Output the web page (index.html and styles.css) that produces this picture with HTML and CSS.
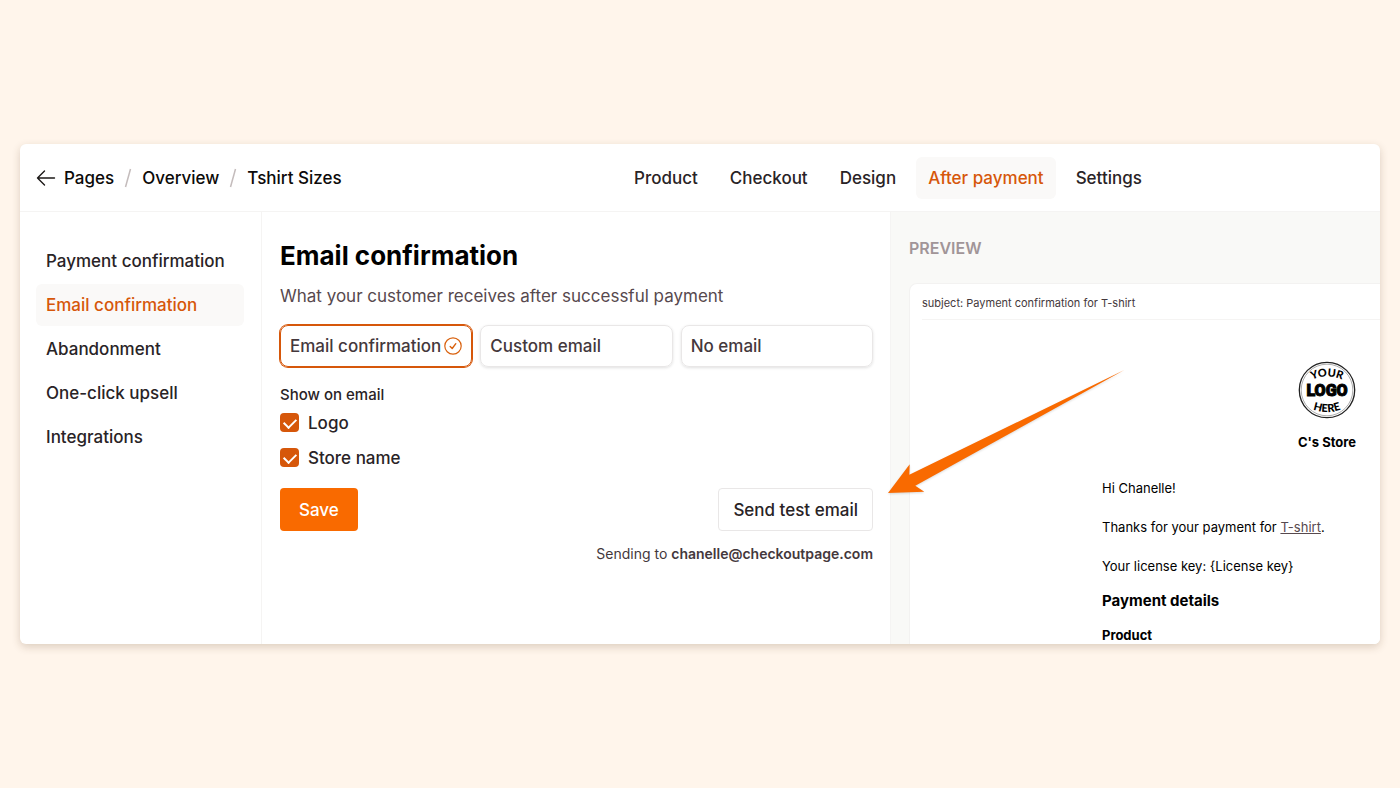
FILE: index.html
```html
<!DOCTYPE html>
<html lang="en">
<head>
    <meta charset="UTF-8">
    <meta name="viewport" content="width=device-width, initial-scale=1.0">
    <title>Email confirmation</title>
    <link rel="stylesheet" href="styles.css">
</head>
<body>
    <div class="window">
        <header class="header">
            <nav class="breadcrumb">
                <a href="#" class="back">
                    <svg width="20" height="18" viewBox="0 0 20 18" fill="none" stroke="#1c1917" stroke-width="1.4" stroke-linecap="round" stroke-linejoin="round"><path d="M18.500 9H1.500M8.500 2L1.500 9l7 7"/></svg>
                    Pages
                </a>
                <svg class="slash" width="8" height="20" viewBox="0 0 8 20" stroke="#c4bcbc" stroke-width="1.500"><path d="M6.500 1L1.500 19"/></svg>
                <a href="#">Overview</a>
                <svg class="slash" width="8" height="20" viewBox="0 0 8 20" stroke="#c4bcbc" stroke-width="1.500"><path d="M6.500 1L1.500 19"/></svg>
                <a href="#">Tshirt Sizes</a>
            </nav>
            <nav class="tabs">
                <a href="#">Product</a>
                <a href="#">Checkout</a>
                <a href="#">Design</a>
                <a href="#" class="active">After payment</a>
                <a href="#">Settings</a>
            </nav>
        </header>

        <div class="panes">
            <nav class="sidebar">
                <a href="#">Payment confirmation</a>
                <a href="#" class="active">Email confirmation</a>
                <a href="#">Abandonment</a>
                <a href="#">One-click upsell</a>
                <a href="#">Integrations</a>
            </nav>

            <main class="main">
                <h1>Email confirmation</h1>
                <p class="subtitle">What your customer receives after successful payment</p>
                <form>
                    <div class="options">
                        <label class="option">
                            <input type="radio" name="email" checked>
                            <span>Email confirmation</span>
                            <svg class="tick" width="18" height="18" viewBox="0 0 18 18" fill="none" stroke="#d9620f" stroke-linecap="round" stroke-linejoin="round"><circle cx="9" cy="9" r="8.200" stroke-width="1.200"/><path d="M6.200 9.500l2 2 3.600-4.800" stroke-width="1.400"/></svg>
                        </label>
                        <label class="option">
                            <input type="radio" name="email">
                            <span>Custom email</span>
                        </label>
                        <label class="option">
                            <input type="radio" name="email">
                            <span>No email</span>
                        </label>
                    </div>

                    <fieldset class="show">
                        <legend>Show on email</legend>
                        <div class="check">
                            <input type="checkbox" id="logo" checked>
                            <label for="logo">Logo</label>
                        </div>
                        <div class="check">
                            <input type="checkbox" id="storeName" checked>
                            <label for="storeName">Store name</label>
                        </div>
                    </fieldset>

                    <div class="actions">
                        <button type="submit" class="save-btn">Save</button>
                        <button type="button" class="test-btn">Send test email</button>
                    </div>
                    <p class="sending">Sending to <strong>chanelle@checkoutpage.com</strong></p>
                </form>
                <svg class="arrow" width="240" height="128" viewBox="0 0 240 128"><path fill="#f96a00" d="M2 125L23.700 96.300 23.300 106.700 238.300 2 29.300 117.700 38.300 123.700Z"/></svg>
            </main>

            <section class="preview">
                <h2>PREVIEW</h2>
                <div class="email">
                    <p class="subject">subject: Payment confirmation for T-shirt</p>
                    <div class="email-body">
                        <div class="store">
                            <svg class="logo" width="58" height="58" viewBox="0 0 58 58">
                                <circle cx="29" cy="29" r="27.700" fill="#fff" stroke="#222" stroke-width="1.300"/>
                                <circle cx="29" cy="29" r="25.800" fill="none" stroke="#999" stroke-width="0.800"/>
                                <path id="top" d="M9 21Q29 10 49 21" fill="none"/>
                                <path id="bottom" d="M9 46Q29 56 49 46" fill="none"/>
                                <text class="logo-small"><textPath href="#top" startOffset="50%">YOUR</textPath></text>
                                <text class="logo-big" x="29" y="35">LOGO</text>
                                <text class="logo-small"><textPath href="#bottom" startOffset="50%">HERE</textPath></text>
                            </svg>
                            <strong>C's Store</strong>
                        </div>
                        <p>Hi Chanelle!</p>
                        <p>Thanks for your payment for <a href="#">T-shirt</a>.</p>
                        <p>Your license key: {License key}</p>
                        <h3>Payment details</h3>
                        <h4>Product</h4>
                    </div>
                </div>
            </section>
        </div>
    </div>
</body>
</html>
```
FILE: styles.css
```css
* {
    box-sizing: border-box;
}
body {
    margin: 0;
    padding: 20px;
    min-height: 100vh;
    display: flex;
    align-items: center;
    background: #fff5eb;
    color: #292326;
    font-family: Inter, sans-serif;
    font-size: 17px;
    line-height: 24px;
}
h1, h2, h3, h4, p {
    margin: 0;
}
a {
    color: inherit;
    text-decoration: none;
}
.window {
    width: 100%;
    background: white;
    border-radius: 6px;
    overflow: hidden;
    box-shadow: 0 3px 8px rgba(80, 50, 20, 0.2);
}

/* header */
.header {
    display: grid;
    grid-template-columns: 602px 1fr;
    align-items: center;
    height: 68px;
    border-bottom: 1px solid #f5f4f3;
    font-weight: 500;
}
.breadcrumb {
    display: flex;
    align-items: center;
    gap: 10px;
    padding-left: 16px;
    color: #0c0a09;
}
.back {
    display: flex;
    align-items: center;
    gap: 8px;
}
.tabs {
    display: flex;
    gap: 8px;
}
.tabs a {
    padding: 9px 12px;
    border-radius: 6px;
}
.tabs .active,
.sidebar .active {
    background: #faf9f8;
    color: #d6570a;
}

.panes {
    display: grid;
    grid-template-columns: 242px 628px minmax(0, 1fr);
}

/* sidebar */
.sidebar {
    display: flex;
    flex-direction: column;
    gap: 2px;
    padding: 28px 17px 0 16px;
    border-right: 1px solid #f5f4f3;
    font-weight: 500;
}
.sidebar a {
    padding: 9px 10px;
    border-radius: 6px;
}

/* form */
.main {
    position: relative;
    padding: 28px 17px 0 18px;
}
h1 {
    color: #000;
    font-size: 26px;
    font-weight: 700;
    line-height: 32px;
}
.subtitle {
    margin-top: 12px;
    color: #57494e;
}
.options {
    display: grid;
    grid-template-columns: repeat(3, minmax(0, 1fr));
    gap: 8px;
    margin-top: 17px;
}
.option {
    display: flex;
    align-items: center;
    justify-content: space-between;
    height: 42px;
    padding: 0 9px;
    border: 1px solid #e9e7e7;
    border-radius: 8px;
    box-shadow: 0 1px 3px rgba(0, 0, 0, 0.12);
    color: #44383c;
    font-weight: 500;
    white-space: nowrap;
}
.option:has(input:checked) {
    border-color: #d6570a;
    box-shadow: 0 0 0 1px #d6570a;
}
.option input {
    position: absolute;
    opacity: 0;
}
.tick {
    flex: none;
}
.show {
    margin: 18px 0 0;
    padding: 0;
    border: none;
    font-weight: 500;
}
.show legend {
    padding: 0;
    font-size: 15px;
    line-height: 20px;
}
.check {
    display: flex;
    gap: 9px;
    align-items: center;
    height: 35px;
}
.check input {
    appearance: none;
    width: 19px;
    height: 19px;
    margin: 0;
    border-radius: 4px;
    background: #d6570a;
    display: grid;
    place-items: center;
}
.check input:checked::after {
    content: "";
    width: 10px;
    height: 6px;
    border-left: 2px solid white;
    border-bottom: 2px solid white;
    transform: translateY(-1px) rotate(-45deg);
}
.actions {
    display: flex;
    justify-content: space-between;
    margin-top: 13px;
}
button {
    height: 43px;
    border-radius: 4px;
    font: inherit;
    font-weight: 500;
    cursor: pointer;
}
.save-btn {
    padding: 0 19px;
    border: none;
    background: #f96a00;
    color: white;
}
.test-btn {
    padding: 0 14px;
    border: 1px solid #e9e7e7;
    background: white;
    color: #292326;
}
.sending {
    margin-top: 13px;
    color: #44383c;
    font-size: 14px;
    line-height: 20px;
    text-align: right;
}
.sending strong {
    font-weight: 600;
}
.arrow {
    position: absolute;
    top: 156px;
    right: -236px;
    z-index: 1;
    filter: drop-shadow(0 1px 1px rgba(0, 0, 0, 0.15));
}

/* email preview */
.preview {
    padding: 26px 0 0 18px;
    overflow: hidden;
    background: #f9f9f7;
    border-left: 1px solid #f5f4f3;
}
.preview h2 {
    color: #a19598;
    font-size: 16px;
    font-weight: 600;
    line-height: 20px;
}
.email {
    width: 836px;
    margin-top: 25px;
    padding-left: 12px;
    border: 1px solid #f3f2f1;
    border-bottom: none;
    border-radius: 8px 8px 0 0;
    background: white;
}
.subject {
    padding: 10px 0 7px;
    border-bottom: 1px solid #f5f4f3;
    color: #44383c;
    font-size: 11px;
    line-height: 18px;
}
.email-body {
    width: 450px;
    margin-left: 180px;
    padding-top: 41px;
    color: #000;
    font-size: 13px;
    line-height: 19px;
}
.store {
    display: flex;
    flex-direction: column;
    align-items: center;
    gap: 14px;
    margin-bottom: 27px;
}
.logo-small,
.logo-big {
    text-anchor: middle;
    fill: #000;
}
.logo-small {
    font-family: Lato, sans-serif;
    font-size: 11px;
    font-weight: 900;
}
.logo-big {
    font-family: Roboto, sans-serif;
    font-size: 16px;
    font-weight: 900;
    stroke: #000;
    stroke-width: 1px;
}
.email-body p {
    margin-bottom: 20px;
}
.email-body p a {
    color: #57494e;
    text-decoration: underline;
}
.email-body h3 {
    margin-top: -5px;
    font-size: 15px;
    line-height: 20px;
}
.email-body h4 {
    margin-top: 15px;
    font-size: 13px;
    line-height: 18px;
}
```
